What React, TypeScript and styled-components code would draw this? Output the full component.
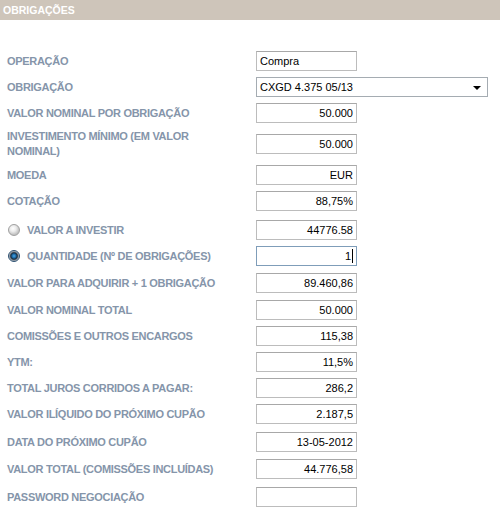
import React from "react";
import styled, { createGlobalStyle } from "styled-components";

const Global = createGlobalStyle`
  html, body { margin: 0; padding: 0; background: #ffffff; }
  body { font-family: "Liberation Sans", Arial, sans-serif; }
`;

const Page = styled.div`
  width: 500px;
  min-height: 517px;
  background: #ffffff;
`;

const Header = styled.div`
  height: 20px;
  background: #cec5ba;
  color: #ffffff;
  font: bold 10.5px/20px "Liberation Sans", Arial, sans-serif;
  padding-left: 3px;
`;

const Form = styled.div`
  padding-top: 31px;
  display: flex;
  flex-direction: column;
`;

const Row = styled.div<{ $gap: number; $tall?: boolean }>`
  display: grid;
  grid-template-columns: 225px auto;
  column-gap: 24px;
  align-items: center;
  padding-left: 7px;
  margin-top: ${(p) => p.$gap}px;
  min-height: ${(p) => (p.$tall ? 30 : 20)}px;
`;

const Label = styled.div`
  color: #8595aa;
  font: bold 11px/15px "Liberation Sans", Arial, sans-serif;
  letter-spacing: -0.3px;
  display: flex;
  align-items: center;
`;

const Radio = styled.span<{ $checked?: boolean }>`
  width: 12px;
  height: 12px;
  box-sizing: border-box;
  border-radius: 50%;
  margin: 0 7px 0 1px;
  flex: none;
  border: 1px solid ${(p) => (p.$checked ? "#2b4f70" : "#a0a0a0")};
  background: ${(p) =>
    p.$checked
      ? "radial-gradient(circle at 50% 50%, #4aa8e8 0, #16609a 2.2px, #1a2a38 3.2px, #8c96a0 4.4px, #e4e4e4 5.5px)"
      : "radial-gradient(circle at 40% 35%, #ffffff 0, #ececec 3px, #c4c4c4 6px)"};
`;

const Field = styled.div<{ $align: "left" | "right"; $width?: number; $focus?: boolean }>`
  box-sizing: border-box;
  width: ${(p) => p.$width ?? 101}px;
  height: 20px;
  border: 1px solid ${(p) => (p.$focus ? "#7f9db9" : "#bcbcbc")};
  border-top-color: ${(p) => (p.$focus ? "#7f9db9" : "#a8a8a8")};
  background: #ffffff;
  color: #000000;
  font: 11px/18px "Liberation Sans", Arial, sans-serif;
  padding: 0 3px;
  text-align: ${(p) => p.$align};
  white-space: nowrap;
  overflow: hidden;
`;

const Caret = styled.span`
  display: inline-block;
  width: 1px;
  height: 14px;
  background: #000000;
  vertical-align: -3px;
  margin-left: 1px;
`;

const Select = styled.div`
  box-sizing: border-box;
  width: 232px;
  height: 20px;
  border: 1px solid #a5acb2;
  background: #ffffff;
  display: flex;
  align-items: center;
  justify-content: space-between;
  padding: 0 6px 0 3px;
  font: 11px "Liberation Sans", Arial, sans-serif;
  color: #000000;
`;

const Arrow = styled.span`
  width: 0;
  height: 0;
  border-left: 4px solid transparent;
  border-right: 4px solid transparent;
  border-top: 4px solid #000000;
  margin-top: 2px;
`;

type Item = {
  label: string;
  value?: string;
  align?: "left" | "right";
  gap: number;
  tall?: boolean;
  radio?: "on" | "off";
  focus?: boolean;
  select?: boolean;
};

const items: Item[] = [
  { label: "OPERAÇÃO", value: "Compra", align: "left", gap: 0 },
  { label: "OBRIGAÇÃO", value: "CXGD 4.375 05/13", select: true, gap: 6 },
  { label: "VALOR NOMINAL POR OBRIGAÇÃO", value: "50.000", gap: 6 },
  { label: "INVESTIMENTO MÍNIMO (EM VALOR NOMINAL)", value: "50.000", gap: 6, tall: true },
  { label: "MOEDA", value: "EUR", gap: 6 },
  { label: "COTAÇÃO", value: "88,75%", gap: 6 },
  { label: "VALOR A INVESTIR", value: "44776.58", gap: 9, radio: "off" },
  { label: "QUANTIDADE (Nº DE OBRIGAÇÕES)", value: "1", gap: 6, radio: "on", focus: true },
  { label: "VALOR PARA ADQUIRIR + 1 OBRIGAÇÃO", value: "89.460,86", gap: 7 },
  { label: "VALOR NOMINAL TOTAL", value: "50.000", gap: 7 },
  { label: "COMISSÕES E OUTROS ENCARGOS", value: "115,38", gap: 6 },
  { label: "YTM:", value: "11,5%", gap: 6 },
  { label: "TOTAL JUROS CORRIDOS A PAGAR:", value: "286,2", gap: 6 },
  { label: "VALOR ILÍQUIDO DO PRÓXIMO CUPÃO", value: "2.187,5", gap: 6 },
  { label: "DATA DO PRÓXIMO CUPÃO", value: "13-05-2012", gap: 8 },
  { label: "VALOR TOTAL (COMISSÕES INCLUÍDAS)", value: "44.776,58", gap: 7 },
  { label: "PASSWORD NEGOCIAÇÃO", value: "", gap: 8 },
];

export default function App() {
  return (
    <Page>
      <Global />
      <Header>OBRIGAÇÕES</Header>
      <Form>
        {items.map((it) => (
          <Row key={it.label} $gap={it.gap} $tall={it.tall}>
            <Label>
              {it.radio && <Radio $checked={it.radio === "on"} />}
              {it.label}
            </Label>
            {it.select ? (
              <Select>
                <span>{it.value}</span>
                <Arrow />
              </Select>
            ) : (
              <Field $align={it.align ?? "right"} $focus={it.focus}>
                {it.value}
                {it.focus && <Caret />}
              </Field>
            )}
          </Row>
        ))}
      </Form>
    </Page>
  );
}
